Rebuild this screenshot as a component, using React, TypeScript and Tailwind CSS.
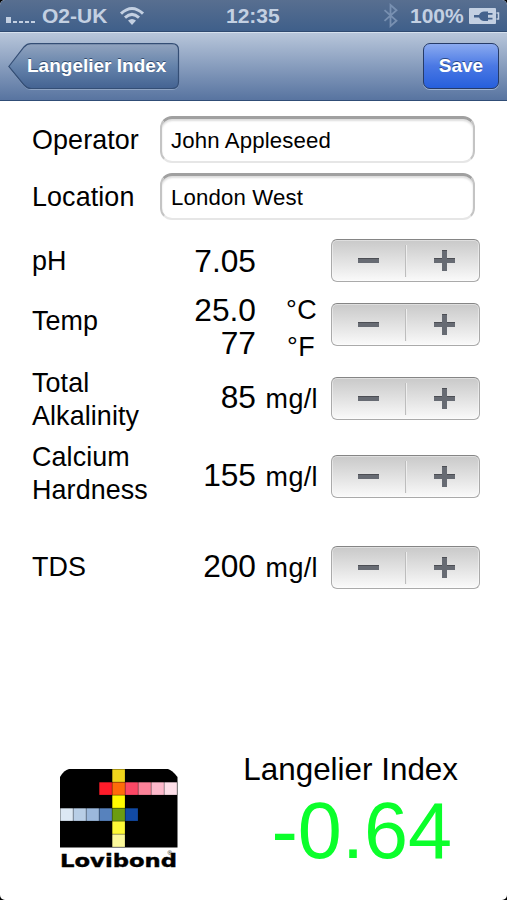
import { useState } from 'react';

const readings = [
  {
    id: 'ph',
    label: 'pH',
    row: 'h-[64px]',
    labelPos: 'pt-[6px]',
    values: [{ text: '7.05', unit: '', valuePos: 'mt-[5px]', unitPos: '' }],
  },
  {
    id: 'temp',
    label: 'Temp',
    row: 'h-[74px]',
    labelPos: 'pt-[2px]',
    values: [
      { text: '25.0', unit: '°C', valuePos: '-mt-[10px]', unitPos: 'mt-px pr-[1px]' },
      { text: '77', unit: '°F', valuePos: '-mt-px', unitPos: 'mt-[5px] pr-[3px]' },
    ],
  },
  {
    id: 'alkalinity',
    label: 'Total Alkalinity',
    row: 'h-[78px]',
    labelPos: '-mt-[10px]',
    values: [{ text: '85', unit: 'mg/l', valuePos: 'mt-[3px]', unitPos: 'mt-[3px]' }],
  },
  {
    id: 'calcium',
    label: 'Calcium Hardness',
    row: 'h-[91px]',
    labelPos: '-mt-[14px]',
    values: [{ text: '155', unit: 'mg/l', valuePos: 'mt-[3px]', unitPos: 'mt-[3px]' }],
  },
  {
    id: 'tds',
    label: 'TDS',
    row: 'h-[43px]',
    labelPos: 'pt-[5px]',
    values: [{ text: '200', unit: 'mg/l', valuePos: 'mt-[3px]', unitPos: 'mt-[3px]' }],
  },
];

const logoCells = [
  { x: 52, y: 0, fill: '#f0d51c' },
  { x: 39, y: 13, fill: '#ff1c2a' },
  { x: 52, y: 13, fill: '#ff6b0a' },
  { x: 65, y: 13, fill: '#fc4765' },
  { x: 78, y: 13, fill: '#fb8298' },
  { x: 91, y: 13, fill: '#fdb9cb' },
  { x: 104, y: 13, fill: '#fddfe8' },
  { x: 52, y: 26, fill: '#fffb00' },
  { x: 0, y: 39, fill: '#dce8f4' },
  { x: 13, y: 39, fill: '#b8cee6' },
  { x: 26, y: 39, fill: '#9bb8dc' },
  { x: 39, y: 39, fill: '#5782bd' },
  { x: 52, y: 39, fill: '#6b9c12' },
  { x: 65, y: 39, fill: '#114aa5' },
  { x: 52, y: 52, fill: '#fdf936' },
  { x: 52, y: 65, fill: '#fcf99b' },
];

function StatusBar() {
  return (
    <div className="flex h-[32px] items-center border-b border-[#2f4a70] bg-gradient-to-b from-[#586f90] to-[#3f5f8a] text-[21px] leading-[30px] font-bold text-[#c3d0e2]">
      <svg className="mt-[9px] ml-[6px] w-[31px]" height="8" viewBox="0 0 31 8" fill="#c3d0e2">
        <rect x="0" y="1" width="5" height="6" />
        <rect x="7" y="5" width="4" height="2" />
        <rect x="13" y="5" width="4" height="2" />
        <rect x="19" y="5" width="4" height="2" />
        <rect x="25" y="5" width="4" height="2" />
      </svg>
      <span className="ml-[5px] w-[66px]">O2-UK</span>
      <svg className="ml-[11px]" width="26" height="20" viewBox="0 0 26 20" fill="none" stroke="#c3d0e2">
        <path d="M2 7.600Q13-2.600 24 7.600" strokeWidth="3" />
        <path d="M6 11.600Q13 5.200 20 11.600" strokeWidth="3" />
        <path d="M9 14.600Q13 11.400 17 14.600L13 19z" fill="#c3d0e2" stroke="none" />
      </svg>
      <span className="ml-[81px] w-[56px]">12:35</span>
      <svg className="ml-[101px]" width="17" height="25" viewBox="0 0 17 25" fill="none" stroke="#7890b1" strokeWidth="1.800">
        <path d="M1.500 7.200 13.500 17.800 7.500 23V2l6 5.200L1.500 17.800" />
      </svg>
      <span className="ml-[10px] w-[54px]">100%</span>
      <svg className="ml-[5px]" width="31" height="18" viewBox="0 0 31 18">
        <rect x="0" y="1" width="27" height="16" rx="1" fill="#c3d0e2" />
        <path d="M27.500 6h2v6h-2" fill="none" stroke="#c3d0e2" strokeWidth="1.500" />
        <path d="M5 8h5c1.500-2.800 3-3.500 5-3.500h4v1.500h4.500v1.700H19v3h4.500v1.700H19v1.500h-4c-2 0-3.500-.700-5-3.500H5z" fill="#45638d" />
      </svg>
    </div>
  );
}

function NavBar() {
  return (
    <div className="flex h-[69px] items-start justify-between border-t border-b border-t-[#d6e1ee] border-b-[#304d76] bg-gradient-to-b from-[#b8c6da] to-[#5874a0] pt-[10px] pr-[8px] pl-[8px]">
      <button className="grid h-[47px] w-[172px] text-left">
        <svg className="col-start-1 row-start-1" width="172" height="47" viewBox="0 0 172 47">
          <defs>
            <linearGradient id="back" x1="0" y1="0" x2="0" y2="1">
              <stop offset="0" stopColor="#92a4bf" />
              <stop offset="0.5" stopColor="#6583ab" />
              <stop offset="1" stopColor="#446392" />
            </linearGradient>
          </defs>
          <path d="M1 24.500 16 5Q19 1.500 23 1.500H164Q170.500 1.500 170.500 8V40Q170.500 46.500 164 46.500H23Q19 46.500 16 43z" fill="none" stroke="#a9bbd3" strokeOpacity=".6" />
          <path d="M.8 23.500 16 4Q19 .7 23 .7H164Q170.500 .7 170.500 7V39Q170.500 45.500 164 45.500H23Q19 45.500 16 42z" fill="url(#back)" stroke="#344e75" strokeWidth="1.200" />
        </svg>
        <span className="col-start-1 row-start-1 pl-[19px] text-[19px] leading-[46px] font-bold text-white [text-shadow:0_-1px_0_#344d70]">Langelier Index</span>
      </button>
      <button className="h-[46px] w-[76px] rounded-[7px] border border-[#263b67] bg-gradient-to-b from-[#8baaf0] via-[#4a78e4] to-[#265fdc] text-[19px] leading-[44px] font-bold text-white shadow-[0_1px_0_#9fb4d3] [text-shadow:0_-1px_0_#294887]">
        Save
      </button>
    </div>
  );
}

function Field({ label, value, onChange }: { label: string; value: string; onChange: (value: string) => void }) {
  return (
    <label className="flex h-[47px] items-center">
      <span className="w-[129px] pt-px pl-px text-[26.9px] tracking-[0.1px]">{label}</span>
      <input
        value={value}
        onChange={(e) => onChange(e.target.value)}
        className="h-[47px] w-[315px] rounded-[12px] border-x-2 border-t-[3px] border-b-2 border-x-[#c4c4c4] border-t-[#a0a0a0] border-b-[#e6e6e6] bg-white px-[9px] pt-px text-[22.200px] tracking-[0.15px] shadow-[inset_0_2px_2px_#ddd] outline-none"
      />
    </label>
  );
}

function Stepper() {
  return (
    <div className="flex h-[43px] w-[149px] shrink-0 items-center rounded-[6px] border border-t-[1.500px] border-[#aaa] border-t-[#858585] bg-gradient-to-b from-[#c9c9c9] to-[#fafafa] shadow-[inset_0_0_0_1px_#ffffff66]">
      <button className="flex h-[32px] w-[74px] items-center justify-center border-r border-[#bdbdbd]">
        <svg width="21" height="21" viewBox="0 0 21 21">
          <path d="M0 8h21v5H0z" fill="#676b73" />
          <path d="M0 8h21v1H0z" fill="#4c4e54" />
        </svg>
      </button>
      <button className="flex h-[32px] flex-1 items-center justify-center border-l border-[#eee] pl-[2px]">
        <svg width="21" height="21" viewBox="0 0 21 21">
          <path d="M8 0h5v8h8v5h-8v8H8v-8H0V8h8z" fill="#676b73" />
          <path d="M8 0h5v1H8zM0 8h8v1H0zM13 8h8v1h-8z" fill="#4c4e54" />
        </svg>
      </button>
    </div>
  );
}

function Logo() {
  return (
    <svg width="119" height="101" viewBox="0 0 119 101">
      <path d="M9 0H108Q112 1 117.500 8V78.500H0V8Q4 1 9 0z" fill="#000" />
      {logoCells.map((cell) => (
        <rect key={`${cell.x}-${cell.y}`} x={cell.x + 0.3} y={cell.y + 0.3} width="12.600" height="12.600" fill={cell.fill} />
      ))}
      <text x="0" y="97.500" textLength="117" lengthAdjust="spacingAndGlyphs" fontFamily="DejaVu Sans" fontWeight="bold" fontSize="18" stroke="#000" strokeWidth=".4">
        Lovibond
      </text>
      <text x="107.500" y="86" fontFamily="Liberation Sans" fontSize="6">®</text>
    </svg>
  );
}

export default function App() {
  const [operator, setOperator] = useState('John Appleseed');
  const [location, setLocation] = useState('London West');

  return (
    <div className="h-[900px] w-[507px] bg-black font-['Liberation_Sans',Arial,sans-serif] text-black">
      <div className="flex h-full flex-col overflow-hidden rounded-[5px] bg-white">
        <StatusBar />
        <NavBar />

        <div className="flex flex-col gap-[10px] pt-[15px] pl-[31px]">
          <Field label="Operator" value={operator} onChange={setOperator} />
          <Field label="Location" value={location} onChange={setLocation} />
        </div>

        <div className="pt-[19px] pl-[31px]">
          {readings.map((reading) => (
            <div key={reading.id} className={`flex items-start ${reading.row}`}>
              <div className={`w-[124px] pl-px text-[26.9px] leading-[33.400px] tracking-[0.1px] ${reading.labelPos}`}>{reading.label}</div>
              <div className="w-[176px]">
                {reading.values.map((value) => (
                  <div key={value.text} className={`flex h-[34px] items-start ${value.valuePos}`}>
                    <span className="w-[101px] text-right text-[31.700px] leading-[34px]">{value.text}</span>
                    <span className={`w-[62px] text-right text-[26.9px] leading-[32px] tracking-[0.4px] ${value.unitPos}`}>{value.unit}</span>
                  </div>
                ))}
              </div>
              <Stepper />
            </div>
          ))}
        </div>

        <div className="mt-auto flex h-[148px] items-start justify-between pr-[49px] pl-[60px]">
          <div className="pt-[17px]">
            <Logo />
          </div>
          <div className="text-right">
            <h2 className="text-[31.400px] leading-[36px]">Langelier Index</h2>
            <p className="pr-[6px] text-[79.200px] leading-[86px] text-[#0bff2b]">-0.64</p>
          </div>
        </div>
      </div>
    </div>
  );
}
